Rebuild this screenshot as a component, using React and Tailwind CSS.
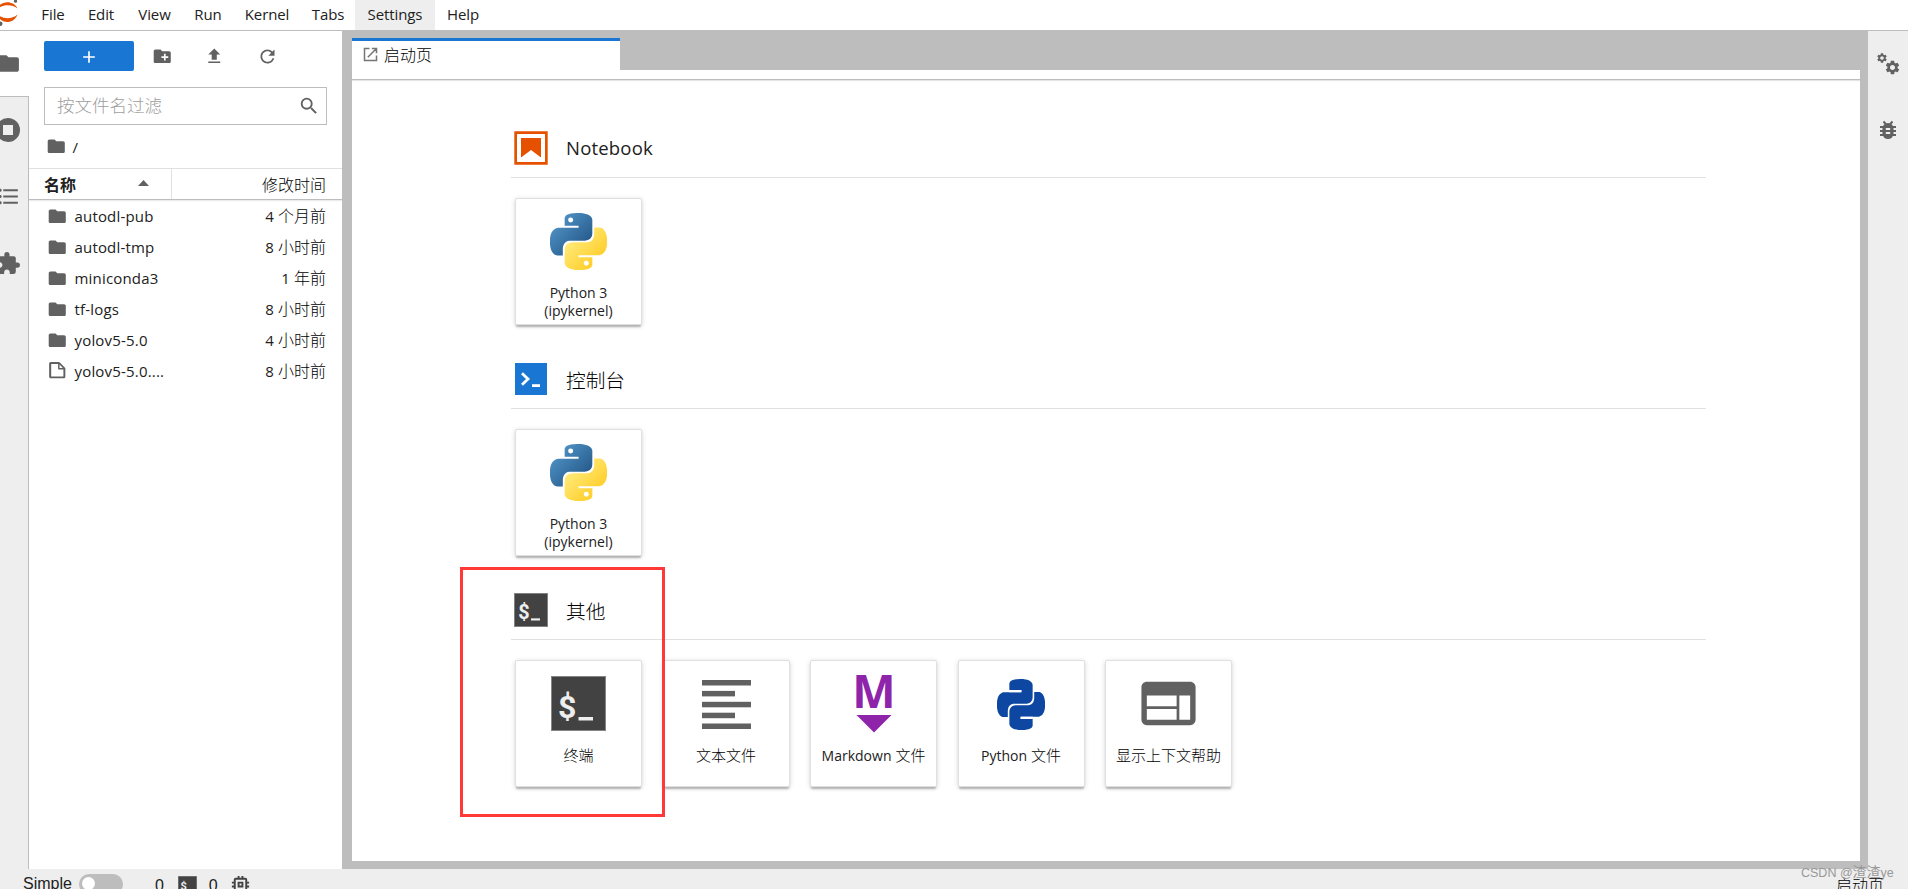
import React from "react";
import {
  MdFolder, MdCreateNewFolder, MdFileUpload, MdRefresh, MdSearch, MdExtension,
  MdSettings, MdFormatListBulleted, MdWeb, MdAdd, MdMemory,
} from "react-icons/md";

const LATIN = "font-['Open_Sans','Noto_Sans_CJK_SC',sans-serif]";

const BLUE =
  "M14.25.18l.9.2.73.26.59.3.45.32.34.34.25.34.16.33.1.3.04.26.02.2-.01.13V8.5l-.05.63-.13.55-.21.46-.26.38-.3.31-.33.25-.35.19-.35.14-.33.1-.3.07-.26.04-.21.02H8.77l-.69.05-.59.14-.5.22-.41.27-.33.32-.27.35-.2.36-.15.37-.1.35-.07.32-.04.27-.02.21v3.06H3.17l-.21-.03-.28-.07-.32-.12-.35-.18-.36-.26-.36-.36-.35-.46-.32-.59-.28-.73-.21-.88-.14-1.05-.05-1.23.06-1.22.16-1.04.24-.87.32-.71.36-.57.4-.44.42-.33.42-.24.4-.16.36-.1.32-.05.24-.01h.16l.06.01h8.16v-.83H6.18l-.01-2.75-.02-.37.05-.34.11-.31.17-.28.25-.26.31-.23.38-.2.44-.18.51-.15.58-.12.64-.1.71-.06.77-.04.84-.02 1.27.05z";
const YELLOW =
  "M21.04 6.11l.28.06.32.12.35.18.36.27.36.35.35.47.32.59.28.73.21.88.14 1.04.05 1.23-.06 1.23-.16 1.04-.24.86-.32.71-.36.57-.4.45-.42.33-.42.24-.4.16-.36.09-.32.05-.24.02-.16-.01h-8.22v.82h5.84l.01 2.76.02.36-.05.34-.11.31-.17.29-.25.25-.31.24-.38.2-.44.17-.51.15-.58.13-.64.09-.71.07-.77.04-.84.01-1.27-.04-1.07-.14-.9-.2-.73-.25-.59-.3-.45-.33-.34-.34-.25-.34-.16-.33-.1-.3-.04-.25-.02-.2.01-.13v-5.34l.05-.64.13-.54.21-.46.26-.38.3-.32.33-.24.35-.2.35-.14.33-.1.3-.06.26-.04.21-.02.13-.01h5.84l.69-.05.59-.14.5-.21.41-.28.33-.32.27-.35.2-.36.15-.36.1-.35.07-.32.04-.28.02-.21V6.07h2.09z";

function PythonLogo({ id }) {
  return (
    <svg width="57" height="57" viewBox="0 0 24 24">
      <defs>
        <linearGradient id={id + "b"} x1="0" y1="0" x2="1" y2="1">
          <stop offset="0" stopColor="#5a9fd4" />
          <stop offset="0.8" stopColor="#265b8b" />
        </linearGradient>
        <linearGradient id={id + "y"} x1="0" y1="0" x2="1" y2="1">
          <stop offset="0.25" stopColor="#ffe873" />
          <stop offset="0.75" stopColor="#ffd031" />
        </linearGradient>
      </defs>
      <path d={BLUE} fill={`url(#${id}b)`} />
      <path d={YELLOW} fill={`url(#${id}y)`} />
      <circle cx="8.7" cy="2.95" r="1.05" fill="#fff" />
      <circle cx="15.3" cy="21.15" r="1.05" fill="#fff" />
    </svg>
  );
}

function PythonFile() {
  return (
    <svg width="48" height="51" viewBox="0 0 24 24" preserveAspectRatio="none" fill="#0d47a1" className="mt-[2px]">
      <path d={BLUE} />
      <path d={YELLOW} />
      <path d="M6.1 5.7H12.3M11.7 18.3H17.9" stroke="#fff" strokeWidth="1.1" />
    </svg>
  );
}

function TerminalIcon({ size }) {
  return (
    <svg width={size} height={size} viewBox="0 0 55 55">
      <rect x="0.5" y="0.5" width="54" height="54" fill="#424242" stroke="#858585" />
      <text x="7" y="41.5" fontFamily="Roboto, sans-serif" fontWeight="700" fontSize="32" fill="#eeeeee">$</text>
      <rect x="27.5" y="41" width="14.5" height="3.5" fill="#eeeeee" />
    </svg>
  );
}

function ConsoleIcon() {
  return (
    <svg width="32" height="32" viewBox="0 0 32 32">
      <rect width="32" height="32" fill="#1976d2" />
      <path d="M7 10.3l6 5.7-6 5.7" fill="none" stroke="#fff" strokeWidth="2.8" />
      <rect x="17" y="21.2" width="8" height="2.8" fill="#fff" />
    </svg>
  );
}

function NotebookIcon() {
  return (
    <svg width="34" height="34" viewBox="0 0 34 34" fill="#e65100">
      <path fillRule="evenodd" d="M0.3 0.3h33.4v33.4H0.3zM3 3v28h28V3z" />
      <path d="M7 7h20v19.5L17 19 7 26.5z" />
    </svg>
  );
}

function TextIcon() {
  return (
    <svg width="49" height="49" viewBox="0 0 49 49" fill="#616161" className="mt-px">
      <rect width="49" height="5.5" y="0" />
      <rect width="33" height="5.5" y="10.9" />
      <rect width="49" height="5.5" y="21.8" />
      <rect width="33" height="5.5" y="32.7" />
      <rect width="49" height="5.5" y="43.5" />
    </svg>
  );
}

function MarkdownIcon() {
  return (
    <svg width="44" height="60" viewBox="0 0 44 60" fill="#8e24aa" className="mt-px">
      <text x="22" y="34" textAnchor="middle" fontFamily="Open Sans, sans-serif" fontWeight="700" fontSize="46">M</text>
      <path d="M4.5 41h35L22 58.5z" />
    </svg>
  );
}

function BugIcon() {
  return (
    <svg width="18" height="20" viewBox="0 0 18 20" fill="#616161" className="mt-[44px]">
      <path d="M4.5 1.5L7 4.2M13.5 1.5L11 4.2" stroke="#616161" strokeWidth="2" />
      <path d="M1 7h16M1 11h16M1 15h16" stroke="#616161" strokeWidth="2" />
      <rect x="3.5" y="3" width="11" height="16" rx="5.5" />
      <path d="M6.8 9h4.4M6.8 13h4.4" stroke="#eee" strokeWidth="1.8" />
    </svg>
  );
}

function Card({ icon, children }) {
  return (
    <div className="flex h-[127px] w-[127px] shrink-0 flex-col rounded-[2px] border border-[#e0e0e0] bg-white shadow-[0_3px_2px_-1px_rgba(0,0,0,0.24),0_1px_5px_rgba(0,0,0,0.16)]">
      <div className="flex h-[85px] items-center justify-center">{icon}</div>
      <div className="text-center text-[15px] leading-[18px] text-[#212121]">{children}</div>
    </div>
  );
}

function Section({ icon, title, children }) {
  return (
    <section className="h-[231px]">
      <div className="flex h-[56px] items-center border-b border-[#e0e0e0] pb-[3px] pl-[3px]">
        <div className="flex w-[34px] justify-center">{icon}</div>
        <div className="ml-[18px] text-[#212121]">{title}</div>
      </div>
      <div className="mt-5 flex gap-[20.5px] pl-1">{children}</div>
    </section>
  );
}

const Han = ({ children }) => <span className="font-light text-black">{children}</span>;

const KernelLabel = () => (
  <div className="text-[14px]">Python 3<br />(ipykernel)</div>
);

const MENU = [
  ["File", "w-[46px]"], ["Edit", "w-[50px]"], ["View", "w-[57px]"], ["Run", "w-[50px]"],
  ["Kernel", "w-[68px]"], ["Tabs", "w-[54px]"], ["Settings", "w-[80px] bg-[#eeeeee]"], ["Help", "w-[56px]"],
];

const FILES = [
  ["autodl-pub", "4", "个月前"], ["autodl-tmp", "8", "小时前"], ["miniconda3", "1", "年前"],
  ["tf-logs", "8", "小时前"], ["yolov5-5.0", "4", "小时前"], ["yolov5-5.0....", "8", "小时前"],
];

function JupyterLogo() {
  return (
    <svg width="30" height="30" viewBox="0 0 30 30">
      <path d="M-2.5 9C0 0 14 0 17.5 8.5C12 4 3 4-2.5 9z" fill="#e65100" />
      <path d="M-2.5 14.5C3 19.5 12 19.5 17.5 14.5C14 24.5 0 24.5-2.5 14.5z" fill="#e65100" />
      <circle cx="15.5" cy="1.2" r="1.6" fill="#616161" />
      <circle cx="0.3" cy="23.8" r="2.2" fill="#616161" />
    </svg>
  );
}

export default function App() {
  return (
    <div className={`relative flex h-[889px] w-[1908px] flex-col overflow-hidden bg-[#eeeeee] text-[#212121] ${LATIN}`}>
      <header className="flex h-[31px] shrink-0 border-b border-[#bdbdbd] bg-white">
        <JupyterLogo />
        {MENU.map(([label, cls]) => (
          <div key={label} className={`flex h-[30px] items-center justify-center pb-[2px] text-[15px] tracking-[-0.1px] ${cls}`}>{label}</div>
        ))}
      </header>

      <div className="flex h-[838px] shrink-0">
        <nav className="flex w-[29px] shrink-0 flex-col text-[#616161]">
          <div className="flex h-[65px] items-center bg-white">
            <MdFolder className="-mt-px -ml-[4.5px] size-[25px] shrink-0" />
          </div>
          <div className="flex flex-1 flex-col overflow-hidden border-t border-r border-[#bdbdbd]">
            <div className="flex h-[66px] items-center">
              <svg width="24" height="24" viewBox="0 0 24 24" className="-ml-1 shrink-0">
                <path fill="#616161" fillRule="evenodd" d="M12 0a12 12 0 1 0 0 24 12 12 0 0 0 0-24zM7 7h10v10H7z" />
              </svg>
            </div>
            <div className="flex h-[66px] items-center">
              <MdFormatListBulleted className="-ml-[4.5px] size-[25px] shrink-0" />
            </div>
            <div className="flex h-[68px] items-center">
              <MdExtension className="-ml-[4.5px] size-[25px] shrink-0" />
            </div>
          </div>
        </nav>

        <aside className="flex w-[313px] shrink-0 flex-col bg-white">
          <div className="mt-[10px] flex h-[30px] items-center pl-[15px] text-[#616161]">
            <div className="flex h-[30px] w-[90px] items-center justify-center rounded-[2px] bg-[#1976d2] text-white">
              <MdAdd className="mt-px size-[20px]" />
            </div>
            <MdCreateNewFolder className="mt-px ml-[17.5px] size-[20.5px]" />
            <MdFileUpload className="mt-px ml-[31.5px] size-[20.5px]" />
            <MdRefresh className="mt-px ml-[32.5px] size-[21px]" />
          </div>
          <div className="mt-4 ml-[15px] flex h-[38px] w-[283px] items-center justify-between border border-[#bdbdbd] pr-[6px] pl-3">
            <span className="-mt-[2px] text-[17.5px] font-light text-[#9e9e9e]">按文件名过滤</span>
            <MdSearch className="-mt-px size-[22px] text-[#616161]" />
          </div>
          <div className="mt-[9px] flex h-[24px] items-center pl-[17px]">
            <MdFolder className="size-[20.5px] text-[#616161]" />
            <span className="mt-[2px] ml-[6px] text-[15px]">/</span>
          </div>
          <div className="mt-[10px] flex h-[32px] items-center border-t border-b border-t-[#e0e0e0] border-b-[#bdbdbd] text-[16px] shadow-[0_1px_1px_rgba(0,0,0,0.08)]">
            <div className="flex h-full w-[143px] items-center justify-between border-r border-[#e0e0e0] pr-[22px] pl-[15px]">
              <span className="mt-px font-bold">名称</span>
              <svg width="11" height="6" viewBox="0 0 11 6" className="-mt-[3px]"><path d="M0 6l5.5-6 5.5 6z" fill="#616161" /></svg>
            </div>
            <div className="mt-px flex-1 pr-4 text-right"><Han>修改时间</Han></div>
          </div>
          {FILES.map(([name, n, unit], i) => (
            <div key={name} className={`flex h-[31px] shrink-0 items-center pr-4 pl-[18px] ${i === 0 ? "mt-px" : ""}`}>
              {i < 5 ? (
                <MdFolder className="-mt-px size-[20.5px] text-[#616161]" />
              ) : (
                <svg width="20.5" height="20.5" viewBox="0 0 22 22" className="-mt-[2px]">
                  <path fill="#616161" d="M19.3 8.2l-5.5-5.5c-.3-.3-.7-.5-1.2-.5H3.9c-.8.1-1.6.9-1.6 1.8v14.1c0 .9.7 1.6 1.6 1.6h14.2c.9 0 1.6-.7 1.6-1.6V9.4c.1-.5-.1-.9-.4-1.2zm-5.8-3.3l3.4 3.6h-3.4V4.9zm3.9 12.7H4.7c-.1 0-.2 0-.2-.2V4.7c0-.2.1-.3.2-.3h7.2v4.4s0 .8.3 1.1c.3.3 1.1.3 1.1.3h4.3v7.2s-.1.2-.2.2z" />
                </svg>
              )}
              <span className="ml-[7px] flex-1 text-[15px] tracking-[0.18px]">{name}</span>
              <span className="-mt-px text-[16px]"><span className="text-[15px]">{n}</span> <Han>{unit}</Han></span>
            </div>
          ))}
        </aside>

        <main className="flex w-[1526px] shrink-0 flex-col bg-[#bdbdbd] pr-2 pb-2 pl-[10px]">
          <div className="flex h-[39px] shrink-0 pt-[7px]">
            <div className="flex h-[32px] w-[268px] items-center border-t-3 border-[#1976d2] bg-white pl-[11px]">
              <svg width="15" height="15" viewBox="0 0 15 15" fill="none" stroke="#757575" strokeWidth="1.5" className="-mt-[3px]">
                <path d="M6.5 1.5h-5v12h12v-5M8.8 1.5h4.7v4.7M13.2 1.8L4.8 10.2" />
              </svg>
              <span className="-mt-[2px] ml-[6px] text-[16px]"><Han>启动页</Han></span>
            </div>
          </div>
          <div className="flex-1 bg-white">
            <div className="h-[10px] border-b border-[#bdbdbd] shadow-[0_1px_1px_rgba(0,0,0,0.1)]" />
            <div className="ml-[159px] w-[1195px] pt-[42px]">
              <Section icon={<NotebookIcon />} title={<span className="text-[18.5px] tracking-[0.2px]">Notebook</span>}>
                <Card icon={<PythonLogo id="n" />}><KernelLabel /></Card>
              </Section>
              <Section icon={<ConsoleIcon />} title={<div className="mt-[3px] text-[19.7px]"><Han>控制台</Han></div>}>
                <Card icon={<PythonLogo id="c" />}><KernelLabel /></Card>
              </Section>
              <Section icon={<TerminalIcon size={34} />} title={<div className="mt-[3px] text-[19.7px]"><Han>其他</Han></div>}>
                <Card icon={<TerminalIcon size={55} />}><Han>终端</Han></Card>
                <Card icon={<TextIcon />}><Han>文本文件</Han></Card>
                <Card icon={<MarkdownIcon />}><span className="text-[14px]">Markdown</span> <Han>文件</Han></Card>
                <Card icon={<PythonFile />}><span className="text-[14px]">Python</span> <Han>文件</Han></Card>
                <Card icon={<MdWeb className="h-[65px] w-[65px] text-[#616161]" />}><Han>显示上下文帮助</Han></Card>
              </Section>
            </div>
          </div>
        </main>

        <nav className="flex w-[40px] shrink-0 flex-col items-center text-[#616161]">
          <div className="mt-[21px] flex h-[24px] w-[24px]">
            <MdSettings className="-mr-[4px] size-[12px] shrink-0" />
            <MdSettings className="mt-[7px] size-[17px] shrink-0" />
          </div>
          <BugIcon />
        </nav>
      </div>

      <footer className="flex h-5 shrink-0 items-start overflow-hidden pr-6 pl-[23px] font-['Liberation_Sans','Noto_Sans_CJK_SC',sans-serif] text-[16px] leading-[20px]">
        <span className="mt-[5px]">Simple</span>
        <div className="mt-[5px] ml-[7px] h-[20px] w-[44px] shrink-0 rounded-full bg-[#bdbdbd] p-[3px]">
          <div className="size-[13px] rounded-full bg-white" />
        </div>
        <span className="mt-[7px] ml-[32px]">0</span>
        <div className="mt-[7px] ml-[14px]"><TerminalIcon size={19} /></div>
        <span className="mt-[7px] ml-[12px]">0</span>
        <MdMemory className="mt-[4px] ml-[11px] size-[23px] shrink-0 text-[#424242]" />
        <span className="mt-[7px] ml-auto text-[16px]"><Han>启动页</Han></span>
      </footer>

      <div className="absolute top-[567px] left-[460px] h-[250px] w-[205px] border-3 border-[#ff3838]" />
      <div className="absolute top-[863px] left-[1801px] font-['Liberation_Sans','Noto_Sans_CJK_SC',sans-serif] text-[14px] leading-[18px] whitespace-nowrap text-[#999999]">
        <span className="text-[12.5px]">CSDN @</span>渣渣<span className="text-[12.5px]">ye</span>
      </div>
    </div>
  );
}
